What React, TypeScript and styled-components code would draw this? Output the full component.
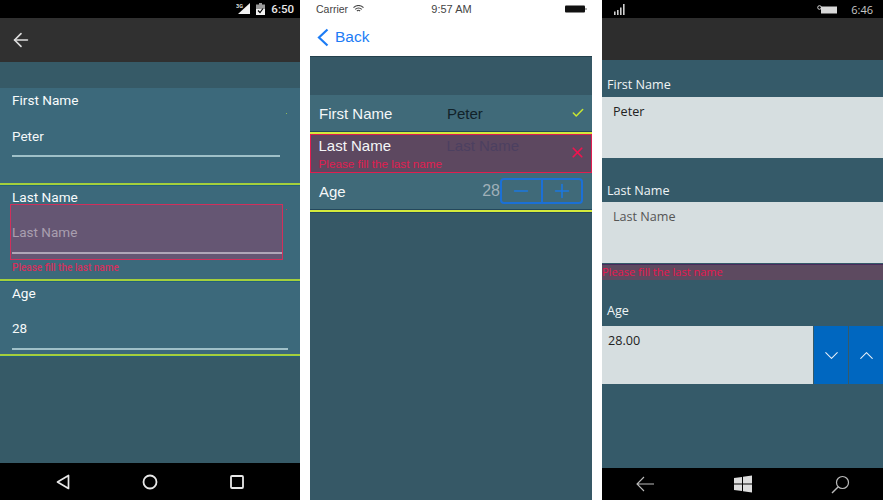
import { createGlobalStyle, styled } from "styled-components";
import { Check, X, Minus, Plus, ChevronDown, ChevronUp, ArrowLeft } from "lucide-react";

const Global = createGlobalStyle`
  html, body { margin: 0; padding: 0; background: #fff; }
  * { box-sizing: border-box; }
`;

const Page = styled.div`
  display: flex;
  width: 883px;
  height: 500px;
  overflow: hidden;
  background: #fff;
`;

const Screen = styled.div<{ $w: number; $font: string; $ml?: number }>`
  display: flex;
  flex-direction: column;
  flex: none;
  width: ${(p) => p.$w}px;
  height: 500px;
  margin-left: ${(p) => p.$ml ?? 0}px;
  background: #365a67;
  font-family: ${(p) => p.$font};
`;

const StatusBar = styled.div`
  display: flex;
  align-items: center;
  justify-content: flex-end;
  flex: none;
  height: 18px;
  gap: 6px;
  padding-right: 6px;
  background: #000;
  color: #e8e8e8;
  font-size: 11.5px;
  font-weight: 500;
`;

const WinStatus = styled(StatusBar)`
  justify-content: space-between;
  padding: 0 10px 0 11px;
  color: #c8c8c8;
  font-size: 11px;
  font-weight: 400;
`;

const WinStatusRight = styled.div`
  display: flex;
  align-items: center;
  gap: 13px;
`;

const Toolbar = styled.div<{ $h: number; $bg: string }>`
  display: flex;
  align-items: center;
  flex: none;
  height: ${(p) => p.$h}px;
  padding-left: 10px;
  background: ${(p) => p.$bg};
  color: #ddd;
`;

const Body = styled.div<{ $top: number; $bg?: string }>`
  flex: 1;
  padding-top: ${(p) => p.$top}px;
  background: ${(p) => p.$bg ?? "#365a67"};
`;

const NavBar = styled.div<{ $h: number; $pad: string }>`
  display: flex;
  align-items: center;
  justify-content: space-between;
  flex: none;
  height: ${(p) => p.$h}px;
  padding: ${(p) => p.$pad};
  background: #000;
`;

/* android */
const DroidRow = styled.div<{ $h: number }>`
  position: relative;
  display: flex;
  flex-direction: column;
  height: ${(p) => p.$h}px;
  padding-left: 12px;
  background: #3c697b;
`;

const DroidGreen = styled.div`
  height: 3px;
  background: linear-gradient(#a4cf3c 0 2px, #22627a 2px);
`;

const DroidLabel = styled.div<{ $top: number }>`
  flex: none;
  margin-top: ${(p) => p.$top}px;
  height: 16px;
  color: #f8fbfb;
  font-size: 13.6px;
  line-height: 16px;
`;

const DroidField = styled.div<{ $w: number; $gap: number }>`
  display: flex;
  flex-direction: column;
  width: ${(p) => p.$w}px;
  margin-top: ${(p) => p.$gap}px;
`;

const DroidValue = styled.div<{ $muted?: boolean }>`
  height: 16px;
  color: ${(p) => (p.$muted ? "#a99fb0" : "#f4f8f8")};
  font-size: 13.5px;
  line-height: 16px;
`;

const DroidLine = styled.div<{ $color?: string; $top: number }>`
  flex: none;
  height: 2px;
  margin-top: ${(p) => p.$top}px;
  background: ${(p) => p.$color ?? "#9fc0c8"};
`;

const DroidError = styled.div`
  flex: none;
  width: 273px;
  height: 56px;
  margin: -1px 0 0 -2px;
  padding: 18.5px 0 0 1px;
  background: #655673;
  border: 1.5px solid #d0305c;
`;

const DroidErrorText = styled.div`
  flex: none;
  height: 14px;
  margin-top: 1px;
  color: #d4305c;
  font-size: 10px;
  font-weight: 500;
  line-height: 14px;
`;

const DroidDot = styled.span<{ $color: string; $top: number }>`
  position: absolute;
  left: 286px;
  top: ${(p) => p.$top}px;
  width: 1px;
  height: 1px;
  background: ${(p) => p.$color};
`;

/* ios */
const IosStatus = styled.div`
  display: grid;
  grid-template-columns: 1fr auto 1fr;
  align-items: center;
  flex: none;
  height: 18px;
  padding: 0 5px 0 6px;
  background: #fff;
  color: #444;
  font-size: 10.5px;
`;

const Carrier = styled.div`
  display: flex;
  align-items: center;
  gap: 5px;
`;

const Clock = styled.span`
  font-size: 11px;
`;

const Battery = styled.svg`
  justify-self: end;
`;

const IosNav = styled.div`
  display: flex;
  align-items: center;
  flex: none;
  height: 39px;
  gap: 6px;
  padding-left: 7px;
  background: #fff;
  color: #1c7cf5;
  font-size: 15.5px;
  border-bottom: 1px solid #24404c;
`;

const IosRow = styled.div<{ $h: number; $right: number }>`
  display: flex;
  align-items: center;
  height: ${(p) => p.$h}px;
  padding: 0 ${(p) => p.$right}px 0 9px;
  background: #406a79;
  color: #f4f7f8;
  font-size: 15px;
`;

const IosLabel = styled.div`
  flex: none;
  width: 128px;
`;

const IosValue = styled.div`
  flex: 1;
  color: #11222a;
  font-size: 15px;
`;

const IosGreen = styled.div`
  height: 3px;
  background: linear-gradient(#24485c 0 1px, #d4ea3c 1px);
`;

const IosGreenEnd = styled.div`
  height: 4px;
  background: linear-gradient(#24485c 0 1px, #d4ea3c 1px 3px, #24485c 3px);
`;

const IosError = styled.div`
  position: relative;
  height: 39px;
  padding: 2px 8px 0 7.5px;
  background: #5d4860;
  border: 1.5px solid #e01e50;
  color: #f4f7f8;
  font-size: 15px;
`;

const IosErrorTop = styled.div`
  display: flex;
  height: 17px;
  line-height: 17px;
`;

const IosPlaceholder = styled.div`
  color: #4c4060;
`;

const IosErrorText = styled.div`
  margin-top: 3px;
  color: #e01e50;
  font-size: 11.7px;
  line-height: 14px;
`;

const IosCross = styled.div`
  position: absolute;
  right: 5px;
  top: 9px;
  display: flex;
  color: #f0144f;
`;

const IosAge = styled.div`
  flex: 1;
`;

const IosAgeValue = styled.div`
  color: #9fb0b8;
  font-size: 16px;
`;

const Stepper = styled.div`
  display: flex;
  flex: none;
  width: 83px;
  height: 26px;
  border: 2px solid #1b70d6;
  border-radius: 4px;
`;

const StepButton = styled.div<{ $divider?: boolean }>`
  display: flex;
  flex: 1;
  align-items: center;
  justify-content: center;
  color: #1b78e0;
  border-left: ${(p) => (p.$divider ? "2px solid #1b70d6" : "0")};
`;

/* windows */
const WinLabel = styled.div<{ $top: number; $gap: number }>`
  height: 16px;
  margin-top: ${(p) => p.$top}px;
  margin-bottom: ${(p) => p.$gap}px;
  padding-left: 5px;
  color: #f0f4f5;
  font-size: 12.6px;
  line-height: 18px;
`;

const WinInput = styled.div<{ $h: number; $muted?: boolean; $pad?: number }>`
  flex: 1;
  height: ${(p) => p.$h}px;
  padding: 6px 0 0 ${(p) => p.$pad ?? 11}px;
  background: #d6dee0;
  color: ${(p) => (p.$muted ? "#555" : "#222")};
  font-size: 12.6px;
  line-height: 17px;
`;

const WinError = styled.div`
  height: 16px;
  margin-top: 1px;
  background: #5d4a60;
  border-top: 1px solid #4a2a5c;
  color: #e8174f;
  font-size: 11px;
  line-height: 14px;
`;

const WinRow = styled.div`
  display: flex;
  gap: 1px;
`;

const WinSpin = styled.div`
  display: flex;
  align-items: center;
  justify-content: center;
  flex: none;
  width: 34px;
  height: 58px;
  background: #0067c0;
  color: #e8f0f8;
`;

export default function App() {
  return (
    <Page>
      <Global />
      <Screen $w={300} $font={"Roboto, sans-serif"}>
        <StatusBar>
          <svg width="14" height="12" viewBox="0 0 14 12">
            <path d="M14 0v11H2z" fill="#f2f2f2" />
            <text x="0" y="5" fontSize="5.5" fontWeight="700" fill="#ddd" fontFamily="Roboto, sans-serif">3G</text>
          </svg>
          <svg width="9" height="12" viewBox="0 0 9 12">
            <path d="M3 0h3v1.500h3V12H0V1.500h3z" fill="#9a9a9a" />
            <path d="M0 6h9v6H0z" fill="#f2f2f2" />
            <path d="M2 7.500l2 2 3-4" stroke="#000" strokeWidth="1.200" fill="none" />
          </svg>
          <span>6:50</span>
        </StatusBar>
        <Toolbar $h={44} $bg="#303030">
          <ArrowLeft size={22} strokeWidth={1.8} />
        </Toolbar>
        <Body $top={26}>
          <DroidRow $h={95}>
            <DroidLabel $top={4}>First Name</DroidLabel>
            <DroidField $w={268} $gap={20}>
              <DroidValue>Peter</DroidValue>
              <DroidLine $top={11} />
            </DroidField>
            <DroidDot $color="#8fb85a" $top={25} />
          </DroidRow>
          <DroidGreen />
          <DroidRow $h={93}>
            <DroidLabel $top={3}>Last Name</DroidLabel>
            <DroidError>
              <DroidValue $muted>Last Name</DroidValue>
              <DroidLine $top={12} $color="#b0a6b8" />
            </DroidError>
            <DroidErrorText>Please fill the last name</DroidErrorText>
            <DroidDot $color="#d0305c" $top={23} />
          </DroidRow>
          <DroidGreen />
          <DroidRow $h={72}>
            <DroidLabel $top={3}>Age</DroidLabel>
            <DroidField $w={276} $gap={19}>
              <DroidValue>28</DroidValue>
              <DroidLine $top={12} />
            </DroidField>
          </DroidRow>
          <DroidGreen />
        </Body>
        <NavBar $h={37} $pad="0 56px">
          <svg width="14" height="16" viewBox="0 0 14 16">
            <path d="M12.500 1.500v13L1.500 8z" fill="none" stroke="#e8e8e8" strokeWidth="1.700" strokeLinejoin="round" />
          </svg>
          <svg width="16" height="16" viewBox="0 0 16 16">
            <circle cx="8" cy="8" r="6.500" fill="none" stroke="#e8e8e8" strokeWidth="1.800" />
          </svg>
          <svg width="14" height="14" viewBox="0 0 14 14">
            <rect x="1" y="1" width="12" height="12" rx="1" fill="none" stroke="#e8e8e8" strokeWidth="1.800" />
          </svg>
        </NavBar>
      </Screen>

      <Screen $w={282} $ml={10} $font={'"Liberation Sans", sans-serif'}>
        <IosStatus>
          <Carrier>
            Carrier
            <svg width="11" height="8" viewBox="0 0 11 8">
              <path d="M.5 2.600a7 7 0 0 1 10 0M2.200 4.400a4.600 4.600 0 0 1 6.600 0M3.900 6a2.300 2.300 0 0 1 3.200 0" fill="none" stroke="#444" strokeWidth="1.100" />
            </svg>
          </Carrier>
          <Clock>9:57 AM</Clock>
          <Battery width="22" height="8" viewBox="0 0 22 8">
            <rect x="0" y="0.500" width="20" height="7" rx="1" fill="#111" />
            <rect x="20.500" y="3" width="1" height="2" fill="#666" />
          </Battery>
        </IosStatus>
        <IosNav>
          <svg width="12" height="19" viewBox="0 0 12 19">
            <path d="M10.500 1.500 2 9.500l8.500 8" fill="none" stroke="#1c7cf5" strokeWidth="2.200" />
          </svg>
          Back
        </IosNav>
        <Body $top={38} $bg="#365866">
          <IosRow $h={36} $right={7}>
            <IosLabel>First Name</IosLabel>
            <IosValue>Peter</IosValue>
            <Check size={14} strokeWidth={2.6} color="#c8e632" />
          </IosRow>
          <IosGreen />
          <IosError>
            <IosErrorTop>
              <IosLabel>Last Name</IosLabel>
              <IosPlaceholder>Last Name</IosPlaceholder>
            </IosErrorTop>
            <IosErrorText>Please fill the last name</IosErrorText>
            <IosCross>
              <X size={17} strokeWidth={2.4} />
            </IosCross>
          </IosError>
          <IosRow $h={36} $right={9}>
            <IosAge>Age</IosAge>
            <IosAgeValue>28</IosAgeValue>
            <Stepper>
              <StepButton>
                <Minus size={22} strokeWidth={1.7} />
              </StepButton>
              <StepButton $divider>
                <Plus size={22} strokeWidth={1.7} />
              </StepButton>
            </Stepper>
          </IosRow>
          <IosGreenEnd />
        </Body>
      </Screen>

      <Screen $w={281} $ml={10} $font={'"Open Sans", sans-serif'}>
        <WinStatus>
          <svg width="14" height="12" viewBox="0 0 14 12">
            <path d="M1 12V8.500h1.600V12zM4 12V7h1.600v5zM7 12V4.500h1.600V12zM10 12V1h1.600v11z" fill="#cfcfcf" />
          </svg>
          <WinStatusRight>
            <svg width="21" height="9" viewBox="0 0 21 9">
              <rect x="4" y="1.500" width="16" height="7" fill="#d8d8d8" />
              <circle cx="2.500" cy="2.500" r="1.800" fill="none" stroke="#d8d8d8" />
            </svg>
            6:46
          </WinStatusRight>
        </WinStatus>
        <Toolbar $h={42} $bg="#2d2d2d" />
        <Body $top={16} $bg="#355a69">
          <WinLabel $top={0} $gap={5}>First Name</WinLabel>
          <WinRow>
            <WinInput $h={61}>Peter</WinInput>
          </WinRow>
          <WinLabel $top={24} $gap={4}>Last Name</WinLabel>
          <WinRow>
            <WinInput $h={61} $muted>Last Name</WinInput>
          </WinRow>
          <WinError>Please fill the last name</WinError>
          <WinLabel $top={22} $gap={8}>Age</WinLabel>
          <WinRow>
            <WinInput $h={58} $pad={6}>28.00</WinInput>
            <WinSpin>
              <ChevronDown size={23} strokeWidth={1.1} />
            </WinSpin>
            <WinSpin>
              <ChevronUp size={23} strokeWidth={1.1} />
            </WinSpin>
          </WinRow>
        </Body>
        <NavBar $h={32} $pad="0 33px">
          <svg width="20" height="16" viewBox="0 0 20 16">
            <path d="M19 8H2M9 1 2 8l7 7" fill="none" stroke="#bbb" strokeWidth="1.100" />
          </svg>
          <svg width="18" height="18" viewBox="0 0 18 18">
            <path d="M0 3l8-1v6.500H0zM9 1.800 18 .5v8H9zM0 9.500h8V16l-8-1zM9 9.500h9v8l-9-1.300z" fill="#ddd" />
          </svg>
          <svg width="19" height="19" viewBox="0 0 19 19">
            <circle cx="11.500" cy="7.500" r="6" fill="none" stroke="#bbb" strokeWidth="1.200" />
            <path d="M7.300 11.700 1 18" stroke="#bbb" strokeWidth="1.400" />
          </svg>
        </NavBar>
      </Screen>
    </Page>
  );
}
